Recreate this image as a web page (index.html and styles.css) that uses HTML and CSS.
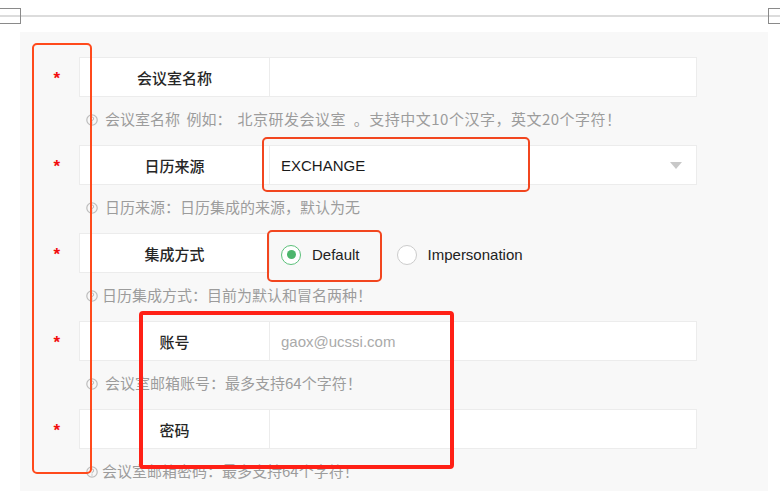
FILE: index.html
```html
<!DOCTYPE html>
<html lang="zh-CN">
<head>
<meta charset="utf-8">
<title>会议室设置</title>
<link rel="stylesheet" href="styles.css">
</head>
<body>
<div class="page">
  <div class="topbar">
    <span class="mark mark-left"></span>
    <span class="mark mark-right"></span>
  </div>
  <div class="panel">
    <div class="row">
      <span class="star">*</span>
      <div class="label">会议室名称</div>
      <div class="field"></div>
    </div>
    <div class="hint"><svg class="qicon" viewBox="0 0 12 12"><circle cx="6" cy="6" r="5.2" fill="none" stroke="#bdbdbd" stroke-width="1.2"/><path d="M4.4 4.7a1.6 1.6 0 1 1 2.3 1.4c-.5.3-.7.6-.7 1.1v.3" fill="none" stroke="#bdbdbd" stroke-width="1.1"/><circle cx="6" cy="9" r=".7" fill="#bdbdbd"/></svg><span>会议室名称 <span class="after-colon">例如：</span><span class="spread">北京研发会议室 。支持中文10个汉字，英文20个字符！</span></span></div>

    <div class="row">
      <span class="star">*</span>
      <div class="label">日历来源</div>
      <div class="field select"><span class="value">EXCHANGE</span><span class="caret"></span></div>
    </div>
    <div class="hint"><svg class="qicon" viewBox="0 0 12 12"><circle cx="6" cy="6" r="5.2" fill="none" stroke="#bdbdbd" stroke-width="1.2"/><path d="M4.4 4.7a1.6 1.6 0 1 1 2.3 1.4c-.5.3-.7.6-.7 1.1v.3" fill="none" stroke="#bdbdbd" stroke-width="1.1"/><circle cx="6" cy="9" r=".7" fill="#bdbdbd"/></svg><span>日历来源：日历集成的来源，默认为无</span></div>

    <div class="row">
      <span class="star">*</span>
      <div class="label">集成方式</div>
      <div class="radios">
        <label class="radio"><span class="dot checked"></span><span>Default</span></label>
        <label class="radio"><span class="dot"></span><span>Impersonation</span></label>
      </div>
    </div>
    <div class="hint"><svg class="qicon" viewBox="0 0 12 12"><circle cx="6" cy="6" r="5.2" fill="none" stroke="#bdbdbd" stroke-width="1.2"/><path d="M4.4 4.7a1.6 1.6 0 1 1 2.3 1.4c-.5.3-.7.6-.7 1.1v.3" fill="none" stroke="#bdbdbd" stroke-width="1.1"/><circle cx="6" cy="9" r=".7" fill="#bdbdbd"/></svg><span class="tight">日历集成方式：目前为默认和冒名两种！</span></div>

    <div class="row">
      <span class="star">*</span>
      <div class="label">账号</div>
      <div class="field"><span class="placeholder">gaox@ucssi.com</span></div>
    </div>
    <div class="hint"><svg class="qicon" viewBox="0 0 12 12"><circle cx="6" cy="6" r="5.2" fill="none" stroke="#bdbdbd" stroke-width="1.2"/><path d="M4.4 4.7a1.6 1.6 0 1 1 2.3 1.4c-.5.3-.7.6-.7 1.1v.3" fill="none" stroke="#bdbdbd" stroke-width="1.1"/><circle cx="6" cy="9" r=".7" fill="#bdbdbd"/></svg><span>会议室邮箱账号：最多支持64个字符！</span></div>

    <div class="row">
      <span class="star">*</span>
      <div class="label">密码</div>
      <div class="field"></div>
    </div>
    <div class="hint"><svg class="qicon" viewBox="0 0 12 12"><circle cx="6" cy="6" r="5.2" fill="none" stroke="#bdbdbd" stroke-width="1.2"/><path d="M4.4 4.7a1.6 1.6 0 1 1 2.3 1.4c-.5.3-.7.6-.7 1.1v.3" fill="none" stroke="#bdbdbd" stroke-width="1.1"/><circle cx="6" cy="9" r=".7" fill="#bdbdbd"/></svg><span class="tight">会议室邮箱密码：最多支持64个字符！</span></div>
  </div>

  <div class="anno anno-stars"></div>
  <div class="anno anno-select"></div>
  <div class="anno anno-radio"></div>
  <div class="anno anno-account"></div>
</div>
</body>
</html>
```

FILE: styles.css
```css
html, body {
  margin: 0;
  padding: 0;
  background: #ffffff;
}
body {
  font-family: "Liberation Sans", "Noto Sans CJK SC", sans-serif;
  font-size: 15px;
  color: #333;
  overflow: hidden;
}
.page {
  position: relative;
  width: 780px;
  height: 491px;
  overflow: hidden;
}
.topbar {
  height: 32px;
  box-sizing: border-box;
  padding-top: 8px;
  display: flex;
  justify-content: space-between;
  align-items: flex-start;
  background: linear-gradient(#ffffff 0, #ffffff 15px, #dcdcdc 15px, #dcdcdc 17px, #ffffff 17px);
}
.mark {
  display: block;
  height: 16px;
  box-sizing: border-box;
  border: 1px solid #8a8a8a;
}
.mark-left {
  width: 21px;
  border-left: none;
}
.mark-right {
  width: 12px;
  border-right: none;
}
.panel {
  margin-left: 20px;
  width: 748px;
  height: 459px;
  box-sizing: border-box;
  background: #f8f8f8;
  padding-top: 25px;
}
.row {
  display: flex;
  align-items: center;
  height: 40px;
}
.star {
  width: 59px;
  box-sizing: border-box;
  padding-right: 19px;
  text-align: right;
  color: #f20d0d;
  font-size: 17px;
  font-weight: bold;
  line-height: 40px;
  padding-top: 4px;
  font-family: "Liberation Sans", sans-serif;
}
.label {
  width: 191px;
  height: 40px;
  box-sizing: border-box;
  background: #fff;
  border: 1px solid #ececec;
  display: flex;
  align-items: center;
  justify-content: center;
  font-family: "Noto Sans CJK SC", sans-serif;
  font-weight: 500;
  font-size: 15px;
  color: #262626;
}
.field {
  width: 427px;
  height: 40px;
  box-sizing: border-box;
  background: #fff;
  border: 1px solid #ececec;
  border-left: none;
  display: flex;
  align-items: center;
  padding-left: 11px;
  padding-right: 11px;
}
.select {
  justify-content: space-between;
}
.value {
  color: #1a1a1a;
  font-size: 15px;
}
.caret {
  width: 0;
  height: 0;
  border-left: 6px solid transparent;
  border-right: 6px solid transparent;
  border-top: 7px solid #c8c8c8;
  margin-right: 3px;
}
.placeholder {
  color: #aaaaaa;
  font-size: 15px;
}
.radios {
  display: flex;
  align-items: center;
  gap: 37px;
  padding-left: 11px;
  margin-top: 3px;
}
.radio {
  display: flex;
  align-items: center;
  gap: 11px;
  color: #222;
  font-size: 15px;
}
.dot {
  width: 20px;
  height: 20px;
  box-sizing: border-box;
  border-radius: 50%;
  border: 1.5px solid #cccccc;
  background: #fff;
  display: flex;
  align-items: center;
  justify-content: center;
}
.dot.checked {
  border-color: #5cc07a;
}
.dot.checked::after {
  content: "";
  width: 9px;
  height: 9px;
  border-radius: 50%;
  background: #4cb56c;
}
.hint {
  height: 48px;
  box-sizing: border-box;
  padding-top: 12px;
  padding-left: 66px;
  display: flex;
  align-items: flex-start;
  gap: 7px;
  line-height: 20px;
  font-family: "Noto Sans CJK SC", sans-serif;
  font-size: 15px;
  color: #9c9c9c;
}
.hint .tight {
  margin-left: -3px;
}
.after-colon {
  margin-left: 3px;
  margin-right: 6px;
}
.spread {
  letter-spacing: 0.5px;
  word-spacing: 4px;
}
.qicon {
  width: 12px;
  height: 12px;
  margin-top: 5px;
  flex: none;
}
.anno {
  position: absolute;
  box-sizing: border-box;
  border-radius: 5px;
}
.anno-stars {
  left: 32px;
  top: 43px;
  width: 60px;
  height: 431px;
  border: 2px solid #ff4a1c;
}
.anno-select {
  left: 262px;
  top: 137px;
  width: 268px;
  height: 55px;
  border: 2px solid #f2461f;
}
.anno-radio {
  left: 267px;
  top: 230px;
  width: 115px;
  height: 52px;
  border: 2px solid #f2461f;
}
.anno-account {
  left: 139px;
  top: 311px;
  width: 315px;
  height: 158px;
  border: 4px solid #ff2016;
  border-radius: 4px;
}
```
